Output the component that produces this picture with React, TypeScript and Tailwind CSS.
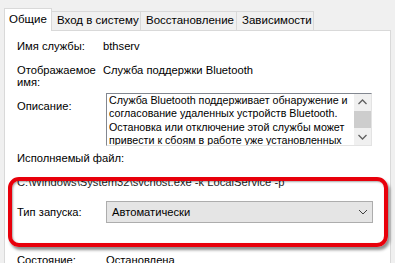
import React from "react";

const font = { fontFamily: '"Liberation Sans", Arial, sans-serif' };

function Tab({ label, selected, w }: { label: string; selected?: boolean; w: string }) {
  if (selected) {
    return (
      <div
        className={`relative z-10 ${w} h-[23px] -mb-px bg-white border border-[#d9d9d9] border-b-0 flex items-center pl-[4px] text-[11.5px] text-black whitespace-nowrap`}
      >
        {label}
      </div>
    );
  }
  return (
    <div
      className={`${w} h-[19px] mt-[3px] bg-[#f0f0f0] border border-[#d9d9d9] border-b-0 border-l-0 flex items-center pl-[5px] text-[11.5px] text-black whitespace-nowrap`}
    >
      {label}
    </div>
  );
}

export default function App() {
  return (
    <div className="relative w-[395px] h-[263px] overflow-hidden bg-[#f0f0f0]" style={font}>
      <div className="flex pt-[8px] pl-[4px]">
        <Tab label="Общие" selected w="w-[48px]" />
        <Tab label="Вход в систему" w="w-[89px]" />
        <Tab label="Восстановление" w="w-[96px]" />
        <Tab label="Зависимости" w="w-[77px]" />
      </div>
      <div className="ml-[4px] w-[387px] h-[260px] bg-white border border-[#d9d9d9] text-[11.2px] text-black">
        <div className="flex pt-[9px] pl-[12px] leading-[13px]">
          <div className="w-[86px]">Имя службы:</div>
          <div>bthserv</div>
        </div>
        <div className="flex pt-[11px] pl-[12px]">
          <div className="w-[86px] leading-[12px]">
            Отображаемое
            <br />
            имя:
          </div>
          <div className="leading-[13px]">Служба поддержки Bluetooth</div>
        </div>
        <div className="flex pt-[5px] pl-[12px]">
          <div className="w-[89px] pt-[5px]">Описание:</div>
          <div className="flex w-[266px] h-[53px] border border-[#828790] border-r-[#e3e3e3] border-b-[#e3e3e3]">
            <div className="flex-1 pl-[2px] pt-[0px] text-[10.7px] leading-[13.3px] whitespace-nowrap overflow-hidden">
              Служба Bluetooth поддерживает обнаружение и
              <br />
              согласование удаленных устройств Bluetooth.
              <br />
              Остановка или отключение этой службы может
              <br />
              привести к сбоям в работе уже установленных
            </div>
            <div className="w-[17px] bg-[#f0f0f0] flex flex-col items-center">
              <svg width="17" height="17" viewBox="0 0 17 17">
                <path d="M4.5 10 L8.5 6 L12.5 10" fill="none" stroke="#606060" strokeWidth="1.3" />
              </svg>
              <div className="w-[17px] h-[17px] bg-[#cdcdcd]" />
              <div className="flex-1" />
              <svg width="17" height="17" viewBox="0 0 17 17">
                <path d="M4.5 7 L8.5 11 L12.5 7" fill="none" stroke="#606060" strokeWidth="1.3" />
              </svg>
            </div>
          </div>
        </div>
        <div className="pt-[6px] pl-[12px] leading-[13px]">Исполняемый файл:</div>
        <div className="pt-[11px] pl-[12px] leading-[13px] whitespace-nowrap text-[#222]">
          C:\Windows\System32\svchost.exe -k LocalService -p
        </div>
        <div className="flex items-center pt-[12px] pl-[12px]">
          <div className="w-[89px]">Тип запуска:</div>
          <div className="relative w-[267px] h-[22px] bg-[#e5e5e5] border border-[#adadad] flex items-center pl-[5px]">
            Автоматически
            <svg className="absolute right-[4px] top-[6px]" width="10" height="8" viewBox="0 0 10 8">
              <path d="M1 2 L5 6 L9 2" fill="none" stroke="#404040" strokeWidth="1" />
            </svg>
          </div>
        </div>
        <div className="flex pt-[31px] pl-[12px] leading-[13px]">
          <div className="w-[89px]">Состояние:</div>
          <div>Остановлена</div>
        </div>
      </div>
      <div
        className="absolute left-[8px] top-[177px] w-[380px] h-[70px] rounded-[11px] border-[4px] border-[#e8000b]"
        style={{ boxShadow: "2px 3px 3px rgba(0,0,0,0.45), inset 1px 1px 2px rgba(0,0,0,0.35)" }}
      />
    </div>
  );
}
